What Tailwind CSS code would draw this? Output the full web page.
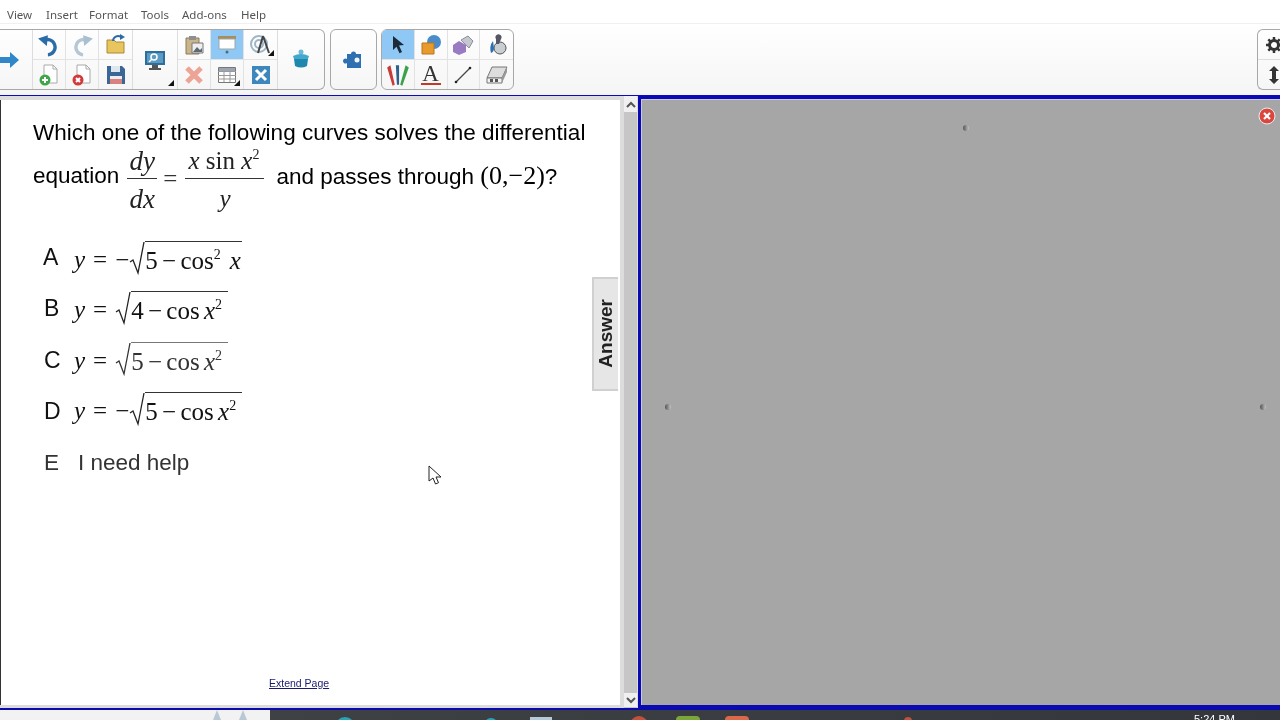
<!DOCTYPE html>
<html lang="en">
<head>
  <meta charset="UTF-8" />
  <title>Notebook lesson</title>
  <script src="https://cdn.jsdelivr.net/npm/@tailwindcss/browser@4"></script>
</head>
<body class="bg-white overflow-hidden">
<div class="relative w-[1280px] h-[720px] overflow-hidden flex flex-col bg-white blur-[0.3px] font-['Liberation_Sans',sans-serif]">

  <!-- Menu bar -->
  <nav class="h-[24px] shrink-0 flex items-center pl-[7px] pt-[6px] text-[11.5px] text-[#555] font-['Noto_Sans',sans-serif] border-b border-[#f0f0f0]">
    <span class="w-[39px]">View</span>
    <span class="w-[43px]">Insert</span>
    <span class="w-[52px]">Format</span>
    <span class="w-[41px]">Tools</span>
    <span class="w-[59px]">Add-ons</span>
    <span>Help</span>
  </nav>

  <!-- Toolbar -->
  <header class="h-[71px] shrink-0 flex items-start pt-[5px] bg-gradient-to-b from-white to-[#f5f5f5]">
    <div class="flex h-[61px] w-[325px] border border-l-0 border-[#a8a8a8] rounded-r-md">
      <div class="w-[33px] flex items-center justify-center border-r border-[#ddd]">
        <svg width="22" height="20" viewBox="0 0 22 20" class="-ml-[10px]"><path d="M0 7h10V2l9 8-9 8v-5H0z" fill="#2f86c9"/></svg>
      </div>
      <div class="grid grid-cols-3 w-[100px] grid-rows-[30px_29px] border-r border-[#ddd]">
        <div class="flex items-center justify-center border-r border-b border-[#e2e2e2]">
          <svg width="24" height="24" viewBox="0 0 22 22"><path d="M6 7a7 7 0 1 1 4 13" fill="none" stroke="#2a6ca8" stroke-width="3"/><path d="M1 5l9-3-1 10z" fill="#2a6ca8"/></svg>
        </div>
        <div class="flex items-center justify-center border-r border-b border-[#e2e2e2]">
          <svg width="24" height="24" viewBox="0 0 22 22"><path d="M16 7a7 7 0 1 0-4 13" fill="none" stroke="#b5c6d4" stroke-width="3"/><path d="M21 5l-9-3 1 10z" fill="#a9c0d3"/></svg>
        </div>
        <div class="flex items-center justify-center border-b border-[#e2e2e2]">
          <svg width="22" height="22" viewBox="0 0 22 22"><path d="M2 6h7l2 2h8v11H2z" fill="#e9c55f" stroke="#a98a35"/><path d="M8 7a5 5 0 0 1 8-4" fill="none" stroke="#2a6ca8" stroke-width="2"/><path d="M15 0l5 3-5 3z" fill="#2a6ca8"/></svg>
        </div>
        <div class="flex items-center justify-center border-r border-[#e2e2e2]">
          <svg width="22" height="22" viewBox="0 0 22 22"><path d="M6 1h9l4 4v14H6z" fill="#fff" stroke="#aaa"/><path d="M15 1v4h4" fill="none" stroke="#aaa"/><circle cx="7" cy="16" r="5.500" fill="#3fa648"/><path d="M7 13v6M4 16h6" stroke="#fff" stroke-width="2"/></svg>
        </div>
        <div class="flex items-center justify-center border-r border-[#e2e2e2]">
          <svg width="22" height="22" viewBox="0 0 22 22"><path d="M6 1h9l4 4v14H6z" fill="#fff" stroke="#aaa"/><path d="M15 1v4h4" fill="none" stroke="#aaa"/><circle cx="7" cy="16" r="5.500" fill="#cf3b3b"/><path d="M5 14l4 4M9 14l-4 4" stroke="#fff" stroke-width="2"/></svg>
        </div>
        <div class="flex items-center justify-center">
          <svg width="20" height="20" viewBox="0 0 20 20"><path d="M1 1h15l3 3v15H1z" fill="#3a6796"/><path d="M5 1h9v6H5z" fill="#dfe7ee"/><path d="M4 11h12v8H4z" fill="#d98080"/><path d="M4 11h12v3H4z" fill="#eee"/></svg>
        </div>
      </div>
      <div class="w-[45px] relative flex items-center justify-center border-r border-[#ddd]">
        <svg width="24" height="22" viewBox="0 0 24 22" class="mt-[2px]"><path d="M2 1h20v14H2z" fill="#2f6d9a"/><path d="M4 3h16v10H4z" fill="#5a9cc4"/><circle cx="11" cy="7" r="3" fill="none" stroke="#fff" stroke-width="1.500"/><path d="M9 9l-3 3" stroke="#fff" stroke-width="1.500"/><path d="M9 15h6v3H9zM6 18h12v2H6z" fill="#555"/></svg>
        <svg width="6" height="6" viewBox="0 0 6 6" class="absolute right-[3px] bottom-[3px]"><path d="M6 0v6H0z" fill="#111"/></svg>
      </div>
      <div class="grid grid-cols-3 w-[100px] grid-rows-[30px_29px] border-r border-[#ddd]">
        <div class="flex items-center justify-center border-r border-b border-[#e2e2e2]">
          <svg width="22" height="22" viewBox="0 0 22 22"><path d="M3 4h13v16H3z" fill="#c9b48b" stroke="#8b7b5c"/><path d="M6 2h7v4H6z" fill="#8f8f8f"/><path d="M9 9h11v10H9z" fill="#eee" stroke="#777"/><path d="M10 18l4-5 3 3 2-2v4z" fill="#5b6b75"/></svg>
        </div>
        <div class="flex items-center justify-center border-r border-b border-[#e2e2e2] bg-[#8fc7f5]">
          <svg width="24" height="22" viewBox="0 0 24 22"><path d="M3 2h18v3H3z" fill="#a98d5d"/><path d="M4 5h16v10H4z" fill="#fff" stroke="#9aa"/><circle cx="12" cy="18" r="1.500" fill="#4d6a7a"/></svg>
        </div>
        <div class="relative flex items-center justify-center border-b border-[#e2e2e2]">
          <svg width="22" height="22" viewBox="0 0 22 22"><circle cx="9" cy="10" r="8" fill="none" stroke="#9fb6c7" stroke-width="2"/><circle cx="9" cy="10" r="4" fill="none" stroke="#9fb6c7" stroke-width="2"/><path d="M13 2l-5 17M13 2l6 17" stroke="#444" stroke-width="2"/></svg>
          <svg width="6" height="6" viewBox="0 0 6 6" class="absolute right-[3px] bottom-[3px]"><path d="M6 0v6H0z" fill="#111"/></svg>
        </div>
        <div class="flex items-center justify-center border-r border-[#e2e2e2]">
          <svg width="20" height="20" viewBox="0 0 20 20"><path d="M3 3l14 14M17 3L3 17" stroke="#eda497" stroke-width="5"/></svg>
        </div>
        <div class="relative flex items-center justify-center border-r border-[#e2e2e2]">
          <svg width="20" height="20" viewBox="0 0 20 20"><path d="M1.500 2.500h17v15h-17z" fill="#fff" stroke="#777"/><path d="M1 6.500h18M1 10.500h18M1 14h18M7 3v14M13 3v14" stroke="#999"/><path d="M2 3h16v3H2z" fill="#9aa7b2"/></svg>
          <svg width="6" height="6" viewBox="0 0 6 6" class="absolute right-[3px] bottom-[3px]"><path d="M6 0v6H0z" fill="#111"/></svg>
        </div>
        <div class="flex items-center justify-center">
          <svg width="20" height="20" viewBox="0 0 20 20"><path d="M1 1h18v18H1z" fill="#3d87bd"/><path d="M5 5l10 10M15 5L5 15" stroke="#fff" stroke-width="3"/></svg>
        </div>
      </div>
      <div class="flex-1 flex items-center justify-center">
        <svg width="20" height="22" viewBox="0 0 20 22"><circle cx="10" cy="3" r="2.500" fill="#6fb8d6"/><path d="M2 7q8-4 16 0l-1 3H3z" fill="#42a8cc"/><path d="M3 10h14l-1 7q-6 3-12 0z" fill="#1f87ad"/></svg>
      </div>
    </div>

    <div class="ml-[5px] w-[47px] h-[61px] border border-[#a8a8a8] rounded-md flex items-center justify-center">
      <svg width="24" height="22" viewBox="0 0 22 22" class="-ml-[3px]"><path d="M6 5h4a2.500 2.500 0 1 1 5 0h5v14H6v-5a2.500 2.500 0 1 1 0-4z" fill="#2d6fb0"/><circle cx="16" cy="11" r="2.500" fill="#f3f3f3"/></svg>
    </div>

    <div class="ml-[4px] w-[133px] h-[61px] border border-[#a8a8a8] rounded-md grid grid-cols-4 grid-rows-[30px_29px] overflow-hidden">
      <div class="flex items-center justify-center border-r border-b border-[#e2e2e2] bg-[#8fc7f5]">
        <svg width="20" height="20" viewBox="0 0 20 20"><path d="M5 1l11 9-5 .6 3 6.400-2.500 1.200-3-6.500L5 15z" fill="#1d2a38"/></svg>
      </div>
      <div class="flex items-center justify-center border-r border-b border-[#e2e2e2]">
        <svg width="22" height="22" viewBox="0 0 22 22"><circle cx="14" cy="8" r="7" fill="#4a8cc9"/><path d="M2 9h12v11H2z" fill="#e99a2c" stroke="#b9741b"/></svg>
      </div>
      <div class="flex items-center justify-center border-r border-b border-[#e2e2e2]">
        <svg width="22" height="22" viewBox="0 0 22 22"><path d="M9 6l7-4 5 5-4 7z" fill="#c5c8cf" stroke="#8b8f98"/><path d="M7 7l7 4v7l-7 3-6-3v-7z" fill="#9a7bc2"/></svg>
      </div>
      <div class="flex items-center justify-center border-b border-[#e2e2e2]">
        <svg width="22" height="22" viewBox="0 0 22 22"><circle cx="14" cy="14" r="6" fill="#c9ced3" stroke="#555"/><path d="M10 5a3 3 0 1 1 5 0l-2 5h-3z" fill="#556"/><path d="M7 7q-4 5-2 12 3-1 3-5z" fill="#2d6fb0"/></svg>
      </div>
      <div class="flex items-center justify-center border-r border-[#e2e2e2]">
        <svg width="26" height="24" viewBox="0 0 24 22"><path d="M2 4l3-2 4 18-2 1z" fill="#c93a3a"/><path d="M10 2h3l0 18h-2z" fill="#2e5f8f"/><path d="M19 2l3 2-6 17-2-1z" fill="#39a24b"/></svg>
      </div>
      <div class="flex flex-col items-center justify-center border-r border-[#e2e2e2]">
        <span class="font-['Liberation_Serif',serif] text-[23px] leading-[19px] w-[20px] text-center text-[#333] border-b-2 border-[#c0392b]">A</span>
      </div>
      <div class="flex items-center justify-center border-r border-[#e2e2e2]">
        <svg width="20" height="20" viewBox="0 0 20 20"><path d="M3 17L17 3" stroke="#444" stroke-width="1.200"/><circle cx="3" cy="17" r="1.300" fill="#222"/><circle cx="17" cy="3" r="1.300" fill="#222"/></svg>
      </div>
      <div class="flex items-center justify-center">
        <svg width="24" height="22" viewBox="0 0 24 22"><path d="M7 3h15l-5 11H2z" fill="#ddd" stroke="#777"/><path d="M2 14h15v5H2z" fill="#f3f3f3" stroke="#777"/><path d="M17 14l5-11v5l-5 11z" fill="#999"/><path d="M5 15h3v3H5zM10 15h3v3h-3z" fill="#555"/></svg>
      </div>
    </div>

    <div class="ml-auto w-[23px] h-[61px] border border-r-0 border-[#a8a8a8] rounded-l-md flex flex-col overflow-hidden">
      <div class="h-[30px] pl-[8px] flex items-center border-b border-[#ddd]">
        <svg width="16" height="16" viewBox="0 0 16 16" class="shrink-0"><circle cx="8" cy="8" r="4.500" fill="none" stroke="#333" stroke-width="3"/><path d="M8 0v3M8 13v3M0 8h3M13 8h3M2.300 2.300l2 2M11.700 11.700l2 2M2.300 13.700l2-2M11.700 4.300l2-2" stroke="#333" stroke-width="2.500"/></svg>
      </div>
      <div class="flex-1 pl-[9px] flex items-center">
        <svg width="14" height="18" viewBox="0 0 14 18" class="shrink-0"><path d="M7 0l5 5H9v8h3l-5 5-5-5h3V5H2z" fill="#333"/></svg>
      </div>
    </div>
  </header>

  <!-- Work area -->
  <div class="h-[1px] shrink-0 bg-[#0a0ac0]"></div>
  <div class="flex-1 min-h-0 flex">

    <!-- Page column -->
    <section class="w-[638px] shrink-0 flex bg-[#dcdcdc]">
      <div class="relative w-[620px] mt-[4px] mb-[3px] border-l border-[#333] bg-white pl-[32px] pt-[20px]">
        <p class="text-[22.5px] leading-[26px] text-black whitespace-nowrap">Which one of the following curves solves the differential</p>

        <div class="flex items-center h-[70px] -mt-[1px] text-[22.5px] text-black whitespace-nowrap">
          <span class="-mt-[8px]">equation</span>
          <span class="ml-[8px] flex flex-col items-center font-['Liberation_Serif',serif] italic text-[27px] leading-[32px] text-[#222] w-[30px]">
            <span class="w-full text-center border-b border-[#333] pb-[1px]">dy</span>
            <span class="pt-[4px]">dx</span>
          </span>
          <span class="ml-[6px] mr-[8px] font-['Liberation_Serif',serif] text-[25px] -mt-[2px] text-[#333]">=</span>
          <span class="flex flex-col items-center font-['Liberation_Serif',serif] text-[25px] leading-[32px] text-[#222] w-[79px]">
            <span class="w-full text-center border-b border-[#333] pb-[1px] pr-[2px] whitespace-nowrap"><i>x</i> sin <i>x</i><sup class="text-[14px] -top-[10px]">2</sup></span>
            <i class="pt-[4px]">y</i>
          </span>
          <span class="ml-[12px] -mt-[10px]">and passes through <span class="font-['Liberation_Serif',serif] text-[26px]">(0,−2)</span>?</span>
        </div>

        <!-- Answer options -->
        <ol class="mt-[19px] ml-[10px] flex flex-col font-['Liberation_Serif',serif] text-[25px] text-[#111] [word-spacing:-2px]">
          <li class="h-[51px] flex items-center whitespace-nowrap">
            <span class="w-[31px] font-['Liberation_Sans',sans-serif] text-[23px] -mt-[4px]">A</span>
            <i>y</i><span class="ml-[8px]">=</span><span class="ml-[8px]">−</span>
            <svg width="16" height="35" viewBox="0 0 16 35" class="-mt-[3px]"><path d="M1 21l3-2 5 13L15 1" fill="none" stroke="#222" stroke-width="1.300"/></svg>
            <span class="border-t border-[#333] pt-[4px] pr-[1px] leading-[30px] -mt-[3px]">5 − cos<sup class="text-[14px] -top-[10px]">2</sup><i class="ml-[9px]">x</i></span>
          </li>
          <li class="h-[50px] flex items-center whitespace-nowrap">
            <span class="w-[31px] pl-[1px] font-['Liberation_Sans',sans-serif] text-[23px] -mt-[4px]">B</span>
            <i>y</i><span class="ml-[8px]">=</span>
            <svg width="16" height="35" viewBox="0 0 16 35" class="ml-[8px] -mt-[3px]"><path d="M1 21l3-2 5 13L15 1" fill="none" stroke="#222" stroke-width="1.300"/></svg>
            <span class="border-t border-[#333] pt-[4px] pr-[6px] leading-[30px] -mt-[3px]">4 − cos <i>x</i><sup class="text-[14px] -top-[10px]">2</sup></span>
          </li>
          <li class="h-[51px] flex items-center whitespace-nowrap">
            <span class="w-[31px] pl-[1px] font-['Liberation_Sans',sans-serif] text-[23px]">C</span>
            <i>y</i><span class="ml-[8px]">=</span>
            <svg width="16" height="35" viewBox="0 0 16 35" class="ml-[8px] -mt-[3px]"><path d="M1 21l3-2 5 13L15 1" fill="none" stroke="#333" stroke-width="1.300"/></svg>
            <span class="border-t border-[#777] pt-[4px] pr-[6px] leading-[30px] -mt-[3px] text-[#333]">5 − cos <i>x</i><sup class="text-[14px] -top-[10px]">2</sup></span>
          </li>
          <li class="h-[50px] flex items-center whitespace-nowrap">
            <span class="w-[31px] pl-[1px] font-['Liberation_Sans',sans-serif] text-[23px]">D</span>
            <i>y</i><span class="ml-[8px]">=</span><span class="ml-[8px]">−</span>
            <svg width="16" height="35" viewBox="0 0 16 35" class="-mt-[3px]"><path d="M1 21l3-2 5 13L15 1" fill="none" stroke="#222" stroke-width="1.300"/></svg>
            <span class="border-t border-[#333] pt-[4px] pr-[6px] leading-[30px] -mt-[3px]">5 − cos <i>x</i><sup class="text-[14px] -top-[10px]">2</sup></span>
          </li>
          <li class="h-[51px] pt-[2px] flex items-center whitespace-nowrap font-['Liberation_Sans',sans-serif] text-[22.5px] text-[#333] [word-spacing:0]">
            <span class="w-[35px] pl-[1px]">E</span>
            <span>I need help</span>
          </li>
        </ol>

        <a class="absolute left-[268px] top-[576px] text-[10.5px] text-[#1a1a6e] underline">Extend Page</a>

        <!-- Answer tab -->
        <div class="absolute right-[2px] top-[177px] w-[26px] h-[114px] bg-[#e6e6e6] border-t-2 border-b-2 border-l-2 border-[#d0d0d0] flex items-center justify-center">
          <span class="[writing-mode:vertical-rl] rotate-180 font-bold text-[19px] text-[#222] -mt-[1px]">Answer</span>
        </div>

        <!-- Mouse pointer -->
        <svg width="14" height="20" viewBox="0 0 14 20" class="absolute left-[427px] top-[365px]"><path d="M1 1v15l4-3 2.500 6 3-1.300L8 12h5z" fill="#fff" stroke="#222"/></svg>
      </div>

      <!-- Scrollbar -->
      <div class="ml-[4px] w-[13px] flex flex-col justify-between bg-[#c6c6c6]">
        <div class="h-[16px] bg-[#f0f0f0] flex items-center justify-center">
          <svg width="10" height="7" viewBox="0 0 10 7"><path d="M1 6l4-4 4 4" fill="none" stroke="#555" stroke-width="2"/></svg>
        </div>
        <div class="h-[14px] mb-[1px] bg-[#f0f0f0] flex items-center justify-center">
          <svg width="10" height="7" viewBox="0 0 10 7"><path d="M1 1l4 4 4-4" fill="none" stroke="#555" stroke-width="2"/></svg>
        </div>
      </div>
    </section>

    <!-- Capture panel -->
    <section class="relative flex-1 bg-[#a6a6a6] border-l-[3px] border-t-[3px] border-b-[3px] border-[#0a0ab0] shadow-[inset_1px_1px_0_#c8c8e8]">
      <span class="absolute left-[322px] top-[26px] w-[6px] h-[6px] rounded-full bg-gradient-to-r from-[#555] to-[#c4c4c4]"></span>
      <span class="absolute left-[24px] top-[305px] w-[6px] h-[6px] rounded-full bg-gradient-to-r from-[#555] to-[#c4c4c4]"></span>
      <span class="absolute left-[619px] top-[305px] w-[6px] h-[6px] rounded-full bg-gradient-to-r from-[#555] to-[#c4c4c4]"></span>
      <svg width="18" height="18" viewBox="0 0 18 18" class="absolute right-[4px] top-[8px]"><circle cx="9" cy="9" r="8" fill="#d9473f" stroke="#eee"/><path d="M6 6l6 6M12 6l-6 6" stroke="#fff" stroke-width="2.200"/></svg>
    </section>
  </div>
  <div class="h-[2px] shrink-0 bg-[#0a0ab0]"></div>

  <!-- Taskbar -->
  <footer class="relative h-[10px] shrink-0 flex bg-gradient-to-r from-[#424446] to-[#33373c] overflow-hidden">
    <div class="w-[270px] bg-[#f2f2f2] flex pl-[212px] gap-[16px]">
      <svg width="10" height="10" viewBox="0 0 10 10"><path d="M5 0l4 10H1z" fill="#b8c8d4"/></svg>
      <svg width="10" height="10" viewBox="0 0 10 10"><path d="M5 0l4 10H1z" fill="#b8c8d4"/></svg>
    </div>
    <span class="absolute left-[335px] top-[7px] w-[20px] h-[20px] rounded-full bg-[#2aa3b5]"></span>
    <span class="absolute left-[484px] top-[8px] w-[14px] h-[14px] rounded-full bg-[#2aa3b5]"></span>
    <span class="absolute left-[530px] top-[7px] w-[22px] h-[14px] bg-[#b5c9d8]"></span>
    <span class="absolute left-[630px] top-[6px] w-[18px] h-[18px] rounded-full bg-[#c2503f]"></span>
    <span class="absolute left-[676px] top-[6px] w-[24px] h-[18px] rounded-sm bg-[#7ba73a]"></span>
    <span class="absolute left-[725px] top-[6px] w-[24px] h-[18px] rounded-sm bg-[#d9694a]"></span>
    <span class="absolute left-[904px] top-[7px] w-[8px] h-[8px] rounded-full bg-[#c2503f]"></span>
    <span class="absolute left-[1194px] top-[3px] text-[11px] leading-[13px] text-white">5:24 PM</span>
  </footer>
</div>
</body>
</html>
